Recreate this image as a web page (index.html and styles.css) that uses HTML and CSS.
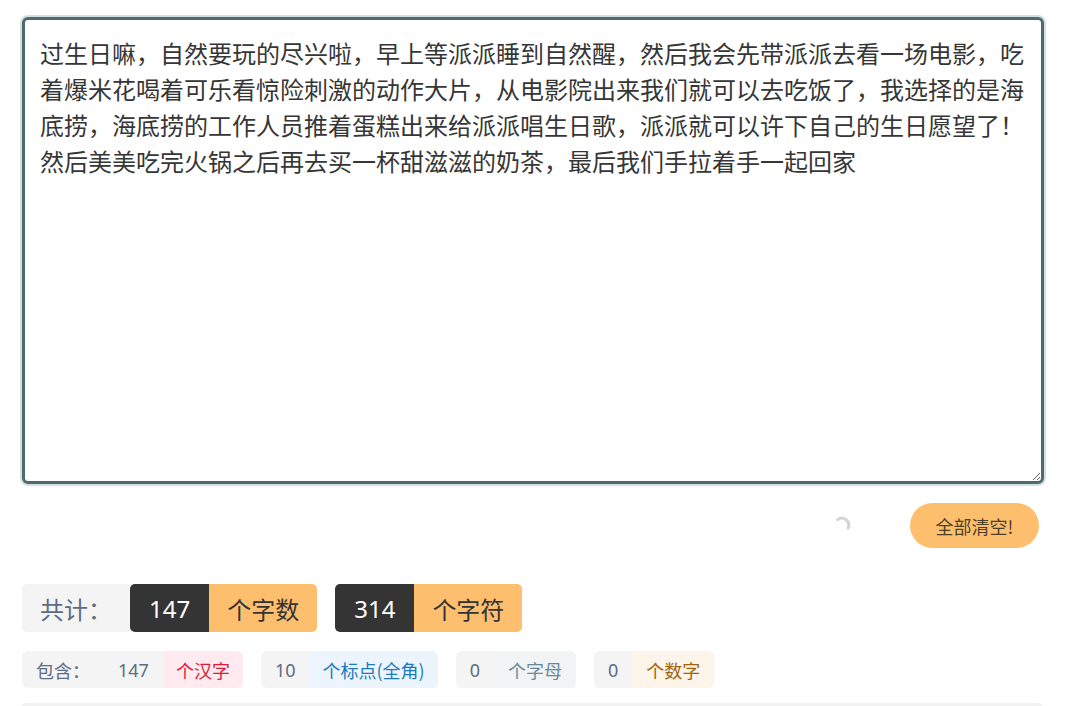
FILE: index.html
```
<!DOCTYPE html>
<html lang="zh-CN">
<head>
<meta charset="utf-8">
<title>字数统计</title>
<link rel="stylesheet" href="styles.css">
</head>
<body>
<div class="page">
  <textarea class="editor">过生日嘛，自然要玩的尽兴啦，早上等派派睡到自然醒，然后我会先带派派去看一场电影，吃着爆米花喝着可乐看惊险刺激的动作大片，从电影院出来我们就可以去吃饭了，我选择的是海底捞，海底捞的工作人员推着蛋糕出来给派派唱生日歌，派派就可以许下自己的生日愿望了！然后美美吃完火锅之后再去买一杯甜滋滋的奶茶，最后我们手拉着手一起回家</textarea>

  <div class="actions">
    <svg class="spinner" width="20" height="20" viewBox="0 0 20 20">
      <path d="M5.6 4.6 A7 7 0 0 1 16.2 13" fill="none" stroke="#d4d4d4" stroke-width="3" stroke-linecap="round"/>
    </svg>
    <button class="clear-btn">全部清空!</button>
  </div>

  <div class="total-row">
    <span class="label-lg">共计：</span>
    <span class="group-lg">
      <span class="num-lg">147</span><span class="unit-lg">个字数</span>
    </span>
    <span class="group-lg">
      <span class="num-lg">314</span><span class="unit-lg">个字符</span>
    </span>
  </div>

  <div class="detail-row">
    <span class="group-sm">
      <span class="label-sm">包含：</span><span class="num-sm">147</span><span class="unit-sm unit-red">个汉字</span>
    </span>
    <span class="group-sm">
      <span class="num-sm">10</span><span class="unit-sm unit-blue">个标点(全角)</span>
    </span>
    <span class="group-sm">
      <span class="num-sm">0</span><span class="unit-sm unit-grey">个字母</span>
    </span>
    <span class="group-sm">
      <span class="num-sm">0</span><span class="unit-sm unit-amber">个数字</span>
    </span>
  </div>

  <div class="next-panel"></div>
</div>
</body>
</html>
```

FILE: styles.css
```
* { box-sizing: border-box; }

html, body {
  margin: 0;
  padding: 0;
  background: #ffffff;
  overflow: hidden;
}

body {
  font-family: "Noto Sans", "Noto Sans CJK SC", sans-serif;
  color: #333333;
}

.page {
  width: 1067px;
  height: 706px;
  padding: 17px 23px 0 22px;
  display: flex;
  flex-direction: column;
  overflow: hidden;
}

.page > * { flex-shrink: 0; }

.editor {
  display: block;
  width: 1022px;
  height: 467px;
  margin: 0;
  padding: 15px 15px;
  border: 3px solid #4e6a70;
  border-radius: 6px;
  box-shadow: 0 0 0 2px #d5dee0;
  outline: none;
  resize: both;
  font-family: "Noto Sans CJK SC", sans-serif;
  font-size: 24px;
  line-height: 36px;
  color: #363636;
  background: #ffffff;
}

.actions {
  display: flex;
  justify-content: flex-end;
  align-items: center;
  gap: 58px;
  margin-top: 19px;
  padding-right: 5px;
  height: 45px;
}

.spinner {
  display: block;
  margin-top: -2px;
  flex-shrink: 0;
}

.clear-btn {
  width: 129px;
  height: 45px;
  flex-shrink: 0;
  border: none;
  border-radius: 23px;
  background: #fdbf6e;
  color: #4f3e28;
  font-family: "Noto Sans CJK SC", sans-serif;
  font-size: 18px;
  padding: 0;
  cursor: pointer;
}

.total-row {
  display: flex;
  align-items: stretch;
  gap: 18px;
  margin-top: 36px;
  height: 48px;
}

.total-row > *, .detail-row > *, .group-lg > *, .group-sm > * { flex-shrink: 0; }

.label-lg {
  display: flex;
  align-items: center;
  padding: 0 18px;
  margin-right: -18px;
  background: #f4f4f5;
  border-radius: 5px 0 0 5px;
  color: #5d6c83;
  font-size: 24px;
  font-family: "Noto Sans CJK SC", sans-serif;
}

.group-lg {
  display: flex;
  border-radius: 5px;
  overflow: hidden;
}

.num-lg {
  display: flex;
  align-items: center;
  padding: 0 19px;
  background: #343434;
  color: #ffffff;
  font-size: 24px;
}

.unit-lg {
  display: flex;
  align-items: center;
  padding: 0 18px;
  background: #fdbf6e;
  color: #333333;
  font-size: 24px;
  font-family: "Noto Sans CJK SC", sans-serif;
}

.detail-row {
  display: flex;
  gap: 18px;
  margin-top: 19px;
  height: 37px;
}

.group-sm {
  display: flex;
  border-radius: 6px;
  overflow: hidden;
  background: #f4f4f5;
}

.label-sm {
  display: flex;
  align-items: center;
  padding: 0 14px;
  color: #5d6c83;
  font-size: 18px;
  font-family: "Noto Sans CJK SC", sans-serif;
  border-radius: 6px;
}

.num-sm {
  display: flex;
  align-items: center;
  padding: 0 14px;
  color: #5d6c83;
  font-size: 18px;
}

.unit-sm {
  display: flex;
  align-items: center;
  padding: 0 14px;
  font-size: 18px;
  font-family: "Noto Sans CJK SC", sans-serif;
}

.unit-red { background: #ffebef; color: #e0183c; padding: 0 13px; }
.unit-blue { background: #ecf5fd; color: #1e79bd; padding: 0 13px; }
.unit-grey { background: #f0f4f5; color: #6b8a96; }
.unit-amber { background: #fdf5ea; color: #a3620c; }

.next-panel {
  margin-top: 15px;
  width: 1020px;
  height: 3px;
  background: #f2f2f3;
  border-radius: 3px 3px 0 0;
}
```
